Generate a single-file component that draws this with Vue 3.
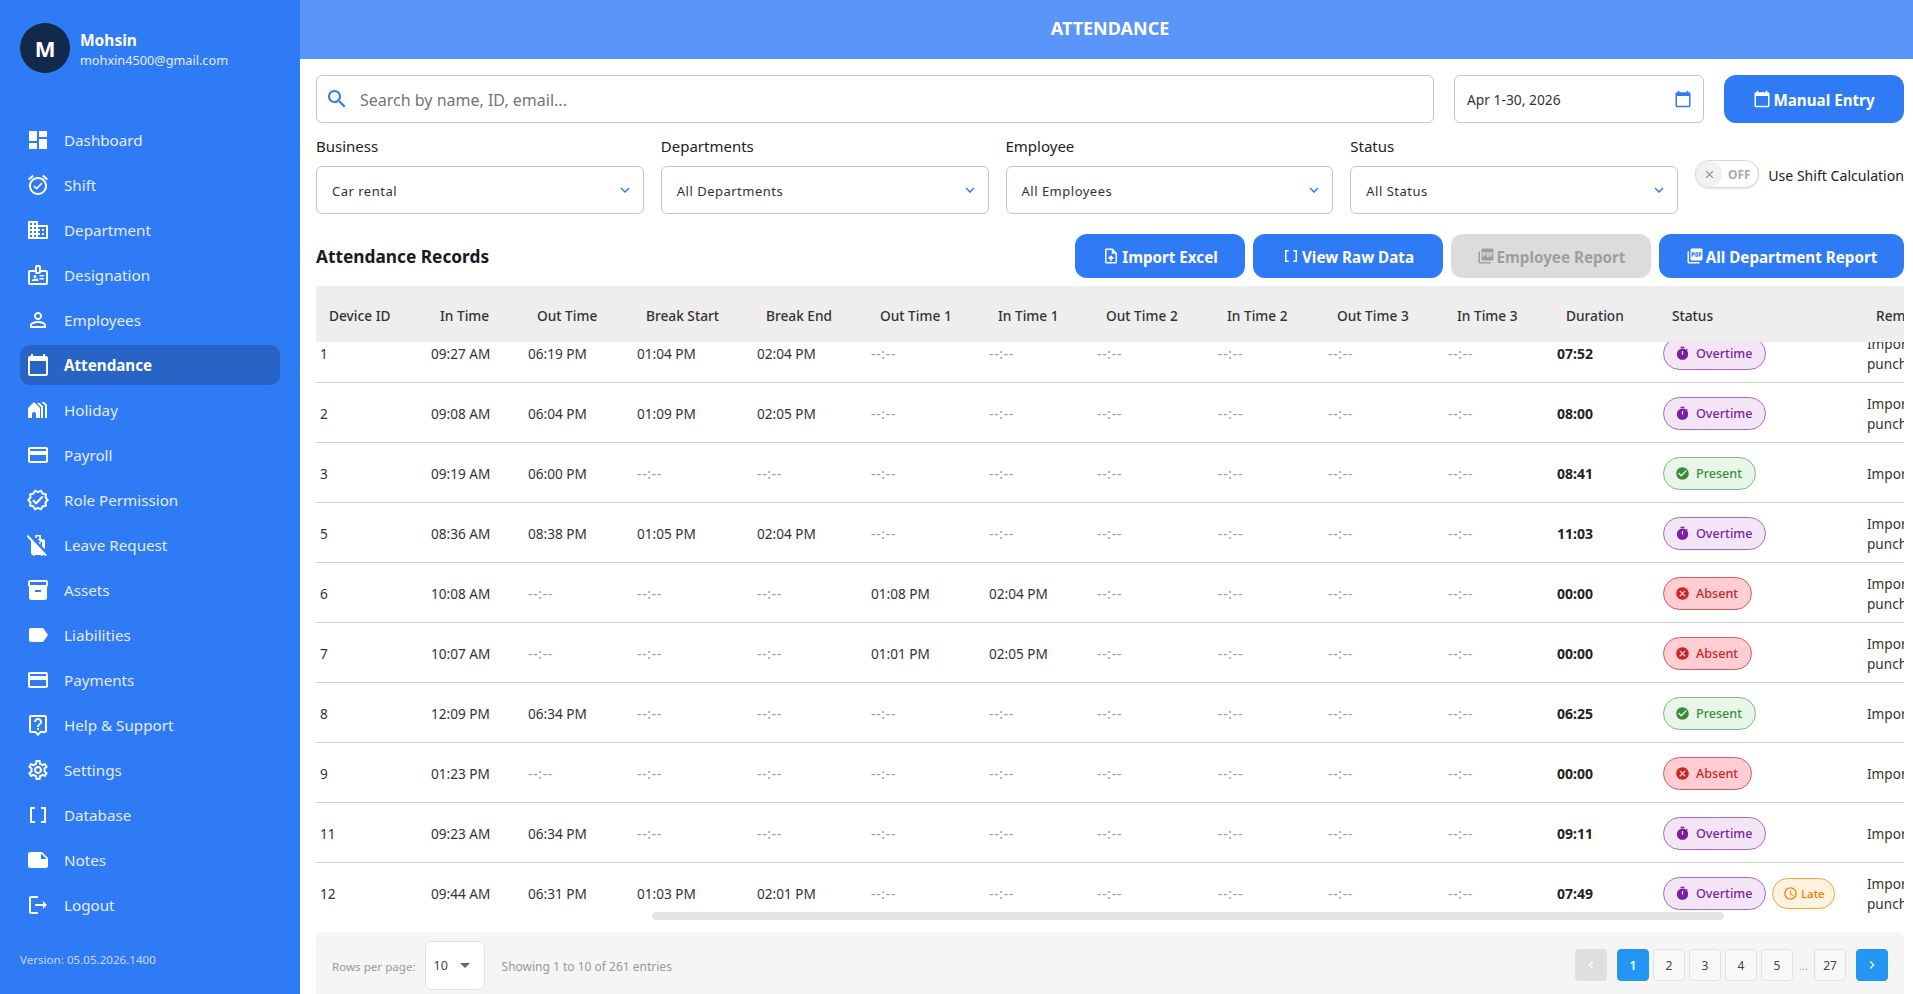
<template>
  <div class="layout">
    <!-- sidebar -->
    <aside class="sidebar">
      <div class="profile">
        <div class="avatar">M</div>
        <div class="profile-text">
          <div class="profile-name">Mohsin</div>
          <div class="profile-mail">mohxin4500@gmail.com</div>
        </div>
      </div>

      <nav class="nav">
        <a v-for="item in navItems" :key="item.label" class="nav-item" :class="{ active: item.label === 'Attendance' }">
          <svg class="nav-icon" viewBox="0 0 24 24"><path :d="item.icon" /></svg>
          <span>{{ item.label }}</span>
        </a>
      </nav>

      <div class="version">Version: 05.05.2026.1400</div>
    </aside>

    <main class="main">
      <header class="topbar">ATTENDANCE</header>

      <div class="content">
        <div class="search-row">
          <div class="field search">
            <svg class="search-icon" viewBox="0 0 24 24"><path :d="icons.search" /></svg>
            <span class="placeholder">Search by name, ID, email...</span>
          </div>
          <div class="field date">
            <span>Apr 1-30, 2026</span>
            <svg class="date-icon" viewBox="0 0 24 24"><path :d="icons.calendar" /></svg>
          </div>
          <button class="btn manual">
            <svg viewBox="0 0 24 24"><path :d="icons.calendar" /></svg>
            Manual Entry
          </button>
        </div>

        <div class="filters">
          <div v-for="f in filters" :key="f.label">
            <label class="filter-label">{{ f.label }}</label>
            <div class="field select">
              <span>{{ f.value }}</span>
              <svg class="chevron" viewBox="0 0 24 24"><path :d="icons.chevron" /></svg>
            </div>
          </div>
          <div class="shift-toggle">
            <div class="toggle">
              <span class="thumb">
                <svg viewBox="0 0 24 24"><path :d="icons.close" /></svg>
              </span>
              <span class="off">OFF</span>
            </div>
            <span>Use Shift Calculation</span>
          </div>
        </div>

        <div class="records-head">
          <h2>Attendance Records</h2>
          <div class="actions">
            <button class="btn import">
              <svg viewBox="0 0 24 24"><path :d="icons.upload" /></svg>
              Import Excel
            </button>
            <button class="btn raw">
              <svg viewBox="0 0 24 24"><path :d="icons.brackets" /></svg>
              View Raw Data
            </button>
            <button class="btn employee" disabled>
              <svg viewBox="0 0 24 24"><path :d="icons.pdf" /></svg>
              Employee Report
            </button>
            <button class="btn department">
              <svg viewBox="0 0 24 24"><path :d="icons.pdf" /></svg>
              All Department Report
            </button>
          </div>
        </div>

        <div class="table-wrap">
          <div ref="scroller" class="table-scroll">
            <table>
              <colgroup>
                <col style="width: 498px" />
                <col v-for="(w, i) in colWidths" :key="i" :style="{ width: w + 'px' }" />
              </colgroup>
              <thead>
                <tr>
                  <th></th>
                  <th v-for="h in headers" :key="h">{{ h }}</th>
                </tr>
              </thead>
              <tbody>
                <tr v-for="row in rows" :key="row.id">
                  <td></td>
                  <td>{{ row.id }}</td>
                  <td v-for="(t, i) in row.times" :key="i" :class="{ empty: t === blank }">{{ t }}</td>
                  <td class="duration">{{ row.duration }}</td>
                  <td>
                    <div class="badges">
                      <span v-for="s in row.status" :key="s" class="badge" :class="s.toLowerCase()">
                        <svg viewBox="0 0 24 24"><path :d="statusIcons[s]" /></svg>
                        {{ s }}
                      </span>
                    </div>
                  </td>
                  <td class="remark">{{ row.remark }}</td>
                </tr>
              </tbody>
            </table>
          </div>
          <div class="scroll-thumb"></div>
        </div>

        <footer class="table-footer">
          <span class="muted rows-label">Rows per page:</span>
          <div class="rows-select">
            <span>10</span>
            <i class="caret"></i>
          </div>
          <span class="muted">Showing 1 to 10 of 261 entries</span>

          <div class="pager">
            <button class="page nav-btn disabled">
              <svg viewBox="0 0 24 24"><path :d="icons.prev" /></svg>
            </button>
            <button v-for="p in pages" :key="p" class="page" :class="{ current: p === 1 }">{{ p }}</button>
            <span class="dots">...</span>
            <button class="page last">27</button>
            <button class="page nav-btn next">
              <svg viewBox="0 0 24 24"><path :d="icons.next" /></svg>
            </button>
          </div>
        </footer>
      </div>
    </main>
  </div>
</template>

<script setup>
import { onMounted, ref } from 'vue'

const icons = {
  search: 'M15.5 14h-.79l-.28-.27C15.41 12.59 16 11.11 16 9.5 16 5.91 13.09 3 9.5 3S3 5.91 3 9.5 5.91 16 9.5 16c1.61 0 3.09-.59 4.23-1.57l.27.28v.79l5 4.99L20.49 19l-4.99-5zm-6 0C7.01 14 5 11.99 5 9.5S7.01 5 9.5 5 14 7.01 14 9.5 11.99 14 9.5 14z',
  calendar: 'M20 3h-1V1h-2v2H7V1H5v2H4c-1.1 0-2 .9-2 2v16c0 1.1.9 2 2 2h16c1.1 0 2-.9 2-2V5c0-1.1-.9-2-2-2zm0 18H4V8h16v13z',
  chevron: 'M16.59 8.59 12 13.17 7.41 8.59 6 10l6 6 6-6z',
  close: 'M19 6.41 17.59 5 12 10.59 6.41 5 5 6.41 10.59 12 5 17.59 6.41 19 12 13.41 17.59 19 19 17.59 13.41 12z',
  upload: 'M14 2H6c-1.1 0-1.99.9-1.99 2L4 20c0 1.1.89 2 1.99 2H18c1.1 0 2-.9 2-2V8l-6-6zm4 18H6V4h7v5h5v11zM8 15.01l1.41 1.41L11 14.84V19h2v-4.16l1.59 1.59L16 15.01 12.01 11z',
  brackets: 'M15 4v2h3v12h-3v2h5V4zM4 20h5v-2H6V6h3V4H4z',
  pdf: 'M20 2H8c-1.1 0-2 .9-2 2v12c0 1.1.9 2 2 2h12c1.1 0 2-.9 2-2V4c0-1.1-.9-2-2-2zm-8.5 7.5c0 .83-.67 1.5-1.5 1.5H9v2H7.5V7H10c.83 0 1.5.67 1.5 1.5v1zm5 2c0 .83-.67 1.5-1.5 1.5h-2.5V7H15c.83 0 1.5.67 1.5 1.5v3zm4-3H19v1h1.5V11H19v2h-1.5V7h3v1.5zM9 9.5h1v-1H9v1zM4 6H2v14c0 1.1.9 2 2 2h14v-2H4V6zm10 5.5h1v-3h-1v3z',
  prev: 'M15.41 7.41 14 6l-6 6 6 6 1.41-1.41L10.83 12z',
  next: 'M10 6 8.59 7.41 13.17 12l-4.58 4.59L10 18l6-6z',
}

const card = 'M20 4H4c-1.11 0-1.99.89-1.99 2L2 18c0 1.11.89 2 2 2h16c1.11 0 2-.89 2-2V6c0-1.11-.89-2-2-2zm0 14H4v-6h16v6zm0-10H4V6h16v2z'

const navItems = [
  { label: 'Dashboard', icon: 'M3 13h8V3H3v10zm0 8h8v-6H3v6zm10 0h8V11h-8v10zm0-18v6h8V3h-8z' },
  { label: 'Shift', icon: 'M22 5.72l-4.6-3.86-1.29 1.53 4.6 3.86L22 5.72zM7.88 3.39L6.6 1.86 2 5.71l1.29 1.53 4.59-3.85zM12 4c-4.97 0-9 4.03-9 9s4.03 9 9 9 9-4.03 9-9-4.03-9-9-9zm0 16c-3.86 0-7-3.14-7-7s3.14-7 7-7 7 3.14 7 7-3.13 7-7 7zm-1.46-5.47L8.41 12.4l-1.06 1.06 3.18 3.18 6-6-1.06-1.06-4.93 4.95z' },
  { label: 'Department', icon: 'M12 7V3H2v18h20V7H12zM6 19H4v-2h2v2zm0-4H4v-2h2v2zm0-4H4V9h2v2zm0-4H4V5h2v2zm4 12H8v-2h2v2zm0-4H8v-2h2v2zm0-4H8V9h2v2zm0-4H8V5h2v2zm10 12h-8v-2h2v-2h-2v-2h2v-2h-2V9h8v10zm-2-8h-2v2h2v-2zm0 4h-2v2h2v-2z' },
  { label: 'Designation', icon: 'M20 7h-5V4c0-1.1-.9-2-2-2h-2c-1.1 0-2 .9-2 2v3H4c-1.1 0-2 .9-2 2v11c0 1.1.9 2 2 2h16c1.1 0 2-.9 2-2V9c0-1.1-.9-2-2-2zM11 4h2v5h-2V4zm9 16H4V9h5c0 1.1.9 2 2 2h2c1.1 0 2-.9 2-2h5v11zM9 15c.83 0 1.5-.67 1.5-1.5S9.83 12 9 12s-1.5.67-1.5 1.5S8.17 15 9 15zm2.08 1.18c-.64-.28-1.35-.43-2.08-.43s-1.44.15-2.08.43c-.74.32-1.22 1.04-1.22 1.85V18h6.6v-.97c0-.81-.48-1.53-1.22-1.85zM13.5 12H18v1.5h-4.5zM13.5 15H18v1.5h-4.5z' },
  { label: 'Employees', icon: 'M12 5.9c1.16 0 2.1.94 2.1 2.1s-.94 2.1-2.1 2.1S9.9 9.16 9.9 8s.94-2.1 2.1-2.1m0 9c2.97 0 6.1 1.46 6.1 2.1v1.1H5.9V17c0-.64 3.13-2.1 6.1-2.1M12 4C9.79 4 8 5.79 8 8s1.79 4 4 4 4-1.79 4-4-1.79-4-4-4zm0 9c-2.67 0-8 1.34-8 4v3h16v-3c0-2.66-5.33-4-8-4z' },
  { label: 'Attendance', icon: icons.calendar },
  { label: 'Holiday', icon: 'M8 4l-6 6v10h4v-4c0-1.1.9-2 2-2s2 .9 2 2v4h4V10L8 4zm7 16h2V8.35L13.65 5H10.8l4.2 4.2V20zm4 0h2V6.69L18.31 4H15.5L19 7.5V20z' },
  { label: 'Payroll', icon: card },
  { label: 'Role Permission', icon: 'M23 11.99l-2.44-2.79.34-3.69-3.61-.82L15.4 1.5 12 2.96 8.6 1.5 6.71 4.69 3.1 5.5l.34 3.7L1 11.99l2.44 2.79-.34 3.7 3.61.82 1.89 3.2 3.4-1.47 3.4 1.46 1.89-3.19 3.61-.82-.34-3.69 2.44-2.8zm-3.95 1.48l-.56.65.08.85.18 1.95-1.9.43-.84.19-.44.74-.99 1.68-1.78-.77-.8-.34-.79.34-1.78.77-.99-1.67-.44-.74-.84-.19-1.9-.43.18-1.96.08-.85-.56-.65L3.67 12l1.29-1.48.56-.65-.09-.86-.18-1.94 1.9-.43.84-.19.44-.74.99-1.68 1.78.77.8.34.79-.34 1.78-.77.99 1.68.44.74.84.19 1.9.43-.18 1.95-.08.85.56.65 1.29 1.47-1.28 1.48zM10.09 13.75l-2.32-2.33-1.48 1.49 3.8 3.81 7.34-7.36-1.48-1.49z' },
  { label: 'Leave Request', icon: 'M12.75 9v.92l1.75 1.75V9H16v4.17l3 3V8c0-1.1-.9-2-2-2h-2V3c0-.55-.45-1-1-1h-4c-.55 0-1 .45-1 1v.92l1.75 1.75V3.5h2.5V6h-1.58l3 3zM2.1 2.1.69 3.51l4.37 4.37C5.02 7.92 5 7.96 5 8v12c0 1.1.9 2 2 2 0 .55.45 1 1 1s1-.45 1-1h6c0 .55.45 1 1 1s1-.45 1-1c.34 0 .65-.09.93-.24l1.56 1.56 1.41-1.41L2.1 2.1z' },
  { label: 'Assets', icon: 'M20 2H4c-1 0-2 .9-2 2v3.01c0 .72.43 1.34 1 1.69V20c0 1.1 1.1 2 2 2h14c.9 0 2-.9 2-2V8.7c.57-.35 1-.97 1-1.69V4c0-1.1-1-2-2-2zm-5 12H9v-2h6v2zm5-7H4V4h16v3z' },
  { label: 'Liabilities', icon: 'M17.63 5.84C17.27 5.33 16.67 5 16 5L5 5.01C3.9 5.01 3 5.9 3 7v10c0 1.1.9 1.99 2 1.99L16 19c.67 0 1.27-.33 1.63-.84L22 12l-4.37-6.16z' },
  { label: 'Payments', icon: card },
  { label: 'Help & Support', icon: 'M19 2H5c-1.11 0-2 .9-2 2v14c0 1.1.89 2 2 2h4l3 3 3-3h4c1.1 0 2-.9 2-2V4c0-1.1-.9-2-2-2zm0 16h-4.83l-.59.59L12 20.17l-1.59-1.59-.58-.58H5V4h14v14zm-8-3h2v2h-2zm1-8c1.1 0 2 .9 2 2 0 2-3 1.75-3 5h2c0-2.25 3-2.5 3-5 0-2.21-1.79-4-4-4S8 6.79 8 9h2c0-1.1.9-2 2-2z' },
  { label: 'Settings', icon: 'M19.43 12.98c.04-.32.07-.64.07-.98 0-.34-.03-.66-.07-.98l2.11-1.65c.19-.15.24-.42.12-.64l-2-3.46c-.09-.16-.26-.25-.44-.25-.06 0-.12.01-.17.03l-2.49 1c-.52-.4-1.08-.73-1.69-.98l-.38-2.65C14.46 2.18 14.25 2 14 2h-4c-.25 0-.46.18-.49.42l-.38 2.65c-.61.25-1.17.59-1.69.98l-2.49-1c-.06-.02-.12-.03-.18-.03-.17 0-.34.09-.43.25l-2 3.46c-.13.22-.07.49.12.64l2.11 1.65c-.04.32-.07.65-.07.98 0 .33.03.66.07.98l-2.11 1.65c-.19.15-.24.42-.12.64l2 3.46c.09.16.26.25.44.25.06 0 .12-.01.17-.03l2.49-1c.52.4 1.08.73 1.69.98l.38 2.65c.03.24.24.42.49.42h4c.25 0 .46-.18.49-.42l.38-2.65c.61-.25 1.17-.59 1.69-.98l2.49 1c.06.02.12.03.18.03.17 0 .34-.09.43-.25l2-3.46c.12-.22.07-.49-.12-.64l-2.11-1.65zm-1.98-1.71c.04.31.05.52.05.73 0 .21-.02.43-.05.73l-.14 1.13.89.7 1.08.84-.7 1.21-1.27-.51-1.04-.42-.9.68c-.43.32-.84.56-1.25.73l-1.06.43-.16 1.13-.2 1.35h-1.4l-.19-1.35-.16-1.13-1.06-.43c-.43-.18-.83-.41-1.23-.71l-.91-.7-1.06.43-1.27.51-.7-1.21 1.08-.84.89-.7-.14-1.13c-.03-.31-.05-.54-.05-.74s.02-.43.05-.73l.14-1.13-.89-.7-1.08-.84.7-1.21 1.27.51 1.04.42.9-.68c.43-.32.84-.56 1.25-.73l1.06-.43.16-1.13.2-1.35h1.39l.19 1.35.16 1.13 1.06.43c.43.18.83.41 1.23.71l.91.7 1.06-.43 1.27-.51.7 1.21-1.07.85-.89.7.14 1.13zM12 8c-2.21 0-4 1.79-4 4s1.79 4 4 4 4-1.79 4-4-1.79-4-4-4zm0 6c-1.1 0-2-.9-2-2s.9-2 2-2 2 .9 2 2-.9 2-2 2z' },
  { label: 'Database', icon: icons.brackets },
  { label: 'Notes', icon: 'M22 10l-6-6H4c-1.1 0-2 .9-2 2v12.01c0 1.1.9 1.99 2 1.99l16-.01c1.1 0 2-.89 2-1.99v-8zm-7-4.5l5.5 5.5H15V5.5z' },
  { label: 'Logout', icon: 'M5 5h7V3H5c-1.1 0-2 .9-2 2v14c0 1.1.9 2 2 2h7v-2H5V5zm16 7l-4-4v3H9v2h8v3l4-4z' },
]

const statusIcons = {
  Overtime: 'M9 1h6v2H9zM19.03 7.39l1.42-1.42c-.43-.51-.9-.99-1.41-1.41l-1.42 1.42C16.07 4.74 14.12 4 12 4c-4.97 0-9 4.03-9 9s4.03 9 9 9 9-4.03 9-9c0-2.12-.74-4.07-1.97-5.61zM13 14h-2V8h2v6z',
  Present: 'M12 2C6.48 2 2 6.48 2 12s4.48 10 10 10 10-4.48 10-10S17.52 2 12 2zm-2 15l-5-5 1.41-1.41L10 14.17l7.59-7.59L19 8l-9 9z',
  Absent: 'M12 2C6.47 2 2 6.47 2 12s4.47 10 10 10 10-4.47 10-10S17.53 2 12 2zm5 13.59L15.59 17 12 13.41 8.41 17 7 15.59 10.59 12 7 8.41 8.41 7 12 10.59 15.59 7 17 8.41 13.41 12 17 15.59z',
  Late: 'M11.99 2C6.47 2 2 6.48 2 12s4.47 10 9.99 10C17.52 22 22 17.52 22 12S17.52 2 11.99 2zM12 20c-4.42 0-8-3.58-8-8s3.58-8 8-8 8 3.58 8 8-3.58 8-8 8zm.5-13H11v6l5.25 3.15.75-1.23-4.5-2.67z',
}

const filters = [
  { label: 'Business', value: 'Car rental' },
  { label: 'Departments', value: 'All Departments' },
  { label: 'Employee', value: 'All Employees' },
  { label: 'Status', value: 'All Status' },
]

const headers = ['Device ID', 'In Time', 'Out Time', 'Break Start', 'Break End', 'Out Time 1', 'In Time 1', 'Out Time 2', 'In Time 2', 'Out Time 3', 'In Time 3', 'Duration', 'Status', 'Remarks']
const colWidths = [111, 97, 109, 120, 114, 118, 108, 121, 110, 120, 109, 106, 204, 307]

const blank = '--:--'
const twoLine = 'Imported from\npunch machine'
const oneLine = 'Imported from device'

// build a row: in, out, break start, break end, then the two punches that some rows have
const makeRow = (id, inTime, outTime, breakStart, breakEnd, out1, in1, duration, status, remark) => ({
  id,
  times: [inTime, outTime, breakStart, breakEnd, out1, in1, blank, blank, blank, blank],
  duration,
  status,
  remark,
})

const rows = [
  makeRow(1, '09:27 AM', '06:19 PM', '01:04 PM', '02:04 PM', blank, blank, '07:52', ['Overtime'], twoLine),
  makeRow(2, '09:08 AM', '06:04 PM', '01:09 PM', '02:05 PM', blank, blank, '08:00', ['Overtime'], twoLine),
  makeRow(3, '09:19 AM', '06:00 PM', blank, blank, blank, blank, '08:41', ['Present'], oneLine),
  makeRow(5, '08:36 AM', '08:38 PM', '01:05 PM', '02:04 PM', blank, blank, '11:03', ['Overtime'], twoLine),
  makeRow(6, '10:08 AM', blank, blank, blank, '01:08 PM', '02:04 PM', '00:00', ['Absent'], twoLine),
  makeRow(7, '10:07 AM', blank, blank, blank, '01:01 PM', '02:05 PM', '00:00', ['Absent'], twoLine),
  makeRow(8, '12:09 PM', '06:34 PM', blank, blank, blank, blank, '06:25', ['Present'], oneLine),
  makeRow(9, '01:23 PM', blank, blank, blank, blank, blank, '00:00', ['Absent'], oneLine),
  makeRow(11, '09:23 AM', '06:34 PM', blank, blank, blank, blank, '09:11', ['Overtime'], oneLine),
  makeRow(12, '09:44 AM', '06:31 PM', '01:03 PM', '02:01 PM', blank, blank, '07:49', ['Overtime', 'Late'], twoLine),
]

const pages = [1, 2, 3, 4, 5]

// the list is a little scrolled, both ways
const scroller = ref(null)
onMounted(() => {
  scroller.value.scrollTop = 19
  scroller.value.scrollLeft = 498
})
</script>

<style>
html,
body {
  margin: 0;
  height: 100%;
  overflow: hidden;
  background: #fff;
}
</style>

<style scoped>
.layout {
  display: flex;
  height: 994px;
  overflow: hidden;
  font-family: "Noto Sans", "Open Sans", sans-serif;
  color: #222;
}

/* sidebar */
.sidebar {
  width: 300px;
  flex-shrink: 0;
  background: #2f7af5;
  padding: 23px 20px 0;
  box-sizing: border-box;
}

.profile {
  display: flex;
  align-items: center;
  gap: 10px;
}

.avatar {
  width: 50px;
  height: 50px;
  border-radius: 50%;
  background: #13294b;
  color: #fff;
  font-size: 22px;
  font-weight: 700;
  display: flex;
  align-items: center;
  justify-content: center;
}

.profile-text {
  padding-top: 3px;
}

.profile-name {
  color: #fff;
  font-size: 15.5px;
  font-weight: 700;
  line-height: 20px;
}

.profile-mail {
  color: #e3edff;
  font-size: 12.7px;
  line-height: 20px;
}

.nav {
  margin-top: 47px;
  display: flex;
  flex-direction: column;
  gap: 5px;
}

.nav-item {
  height: 40px;
  display: flex;
  align-items: center;
  gap: 14px;
  padding-left: 6px;
  border-radius: 10px;
  color: #e3edff;
  font-size: 15.2px;
}

.nav-item.active {
  background: #2764c6;
  color: #fff;
  font-weight: 700;
}

.nav-icon {
  width: 24px;
  height: 24px;
  fill: #fff;
}

.version {
  margin-top: 27px;
  color: #c6d9fb;
  font-size: 11.6px;
  line-height: 16px;
}

/* main */
.main {
  flex: 1;
  min-width: 0;
  display: flex;
  flex-direction: column;
}

.topbar {
  height: 59px;
  flex-shrink: 0;
  background: #5a95f9;
  color: #fff;
  font-size: 18px;
  font-weight: 700;
  display: flex;
  align-items: center;
  justify-content: center;
  padding: 0 0 3px 7px;
  box-sizing: border-box;
}

.content {
  padding: 16px 9px 0 16px;
  min-width: 0;
}

.search-row {
  display: flex;
  gap: 20px;
}

.field {
  height: 48px;
  box-sizing: border-box;
  border: 1px solid #c4c4c4;
  border-radius: 6px;
  background: #fff;
  display: flex;
  align-items: center;
}

.search {
  flex: 1;
  padding-left: 8px;
}

.search-icon {
  width: 24px;
  height: 24px;
  fill: #2f7af5;
}

.placeholder {
  margin: 2px 0 0 11px;
  font-size: 16px;
  color: #757575;
}

.date {
  width: 250px;
  padding: 0 11px 0 12px;
  justify-content: space-between;
  font-size: 13.8px;
  color: #333;
}

.date-icon {
  width: 18px;
  height: 18px;
  fill: #2f7af5;
}

.btn {
  border: none;
  border-radius: 12px;
  background: #2f7af5;
  color: #fff;
  font-family: inherit;
  font-size: 15.2px;
  font-weight: 700;
  display: inline-flex;
  align-items: center;
  justify-content: center;
  gap: 2px;
  padding: 2px 0 0;
  white-space: nowrap;
}

.btn svg {
  width: 18px;
  height: 18px;
  fill: currentColor;
  margin-top: -2px;
}

.manual {
  width: 180px;
  height: 48px;
}

.filters {
  display: grid;
  grid-template-columns: repeat(4, 1fr) 209px;
  column-gap: 17px;
  margin-top: 13px;
}

.filter-label {
  display: block;
  font-size: 15px;
  line-height: 20px;
  margin-bottom: 10px;
  color: #222;
}

.select {
  padding: 2px 9px 0 15px;
  justify-content: space-between;
  font-size: 13px;
  letter-spacing: 0.5px;
  color: #333;
}

.chevron {
  width: 18px;
  height: 18px;
  fill: #2f7af5;
  margin-top: -2px;
}

.shift-toggle {
  margin-top: 24px;
  display: flex;
  align-items: center;
  justify-content: space-between;
  height: 28px;
  font-size: 14.1px;
  color: #222;
  white-space: nowrap;
}

.shift-toggle > span {
  padding-top: 2px;
}

.toggle {
  width: 64px;
  height: 28px;
  box-sizing: border-box;
  border: 1px solid #d8d8d8;
  border-radius: 14px;
  background: #fff;
  box-shadow: 0 1px 2px rgba(0, 0, 0, 0.12);
  display: flex;
  align-items: center;
  color: #aaa;
  font-size: 12px;
  font-weight: 700;
}

.thumb {
  width: 26px;
  height: 26px;
  border-radius: 50%;
  background: #f1f1f1;
  display: flex;
  align-items: center;
  justify-content: center;
}

.thumb svg {
  width: 13px;
  height: 13px;
  fill: #888;
}

.off {
  margin-left: 6px;
}

.records-head {
  margin-top: 20px;
  display: flex;
  align-items: center;
  justify-content: space-between;
}

.records-head h2 {
  margin: 1px 0 0;
  font-size: 17.3px;
  font-weight: 700;
  color: #1a1a1a;
}

.actions {
  display: flex;
  gap: 8px;
}

.actions .btn {
  height: 44px;
}

.import {
  width: 170px;
}

.raw {
  width: 190px;
}

.employee {
  width: 200px;
  background: #dcdcdc;
  color: #9e9e9e;
}

.department {
  width: 245px;
}

/* table */
.table-wrap {
  position: relative;
  margin-top: 8px;
}

.table-scroll {
  height: 634px;
  overflow: auto;
  scrollbar-width: none;
}

/* the horizontal scrollbar, on top of the last row */
.scroll-thumb {
  position: absolute;
  left: 336px;
  bottom: 0;
  width: 1072px;
  height: 8px;
  border-radius: 4px;
  background: #e4e4e4;
}

table {
  width: 2352px;
  table-layout: fixed;
  border-collapse: separate;
  border-spacing: 0;
}

th {
  position: sticky;
  top: 0;
  z-index: 1;
  height: 56px;
  padding: 2px 0 0 13px;
  box-sizing: border-box;
  background: #eee;
  font-size: 13.7px;
  font-weight: 500;
  color: #333;
  text-align: left;
}

td {
  height: 60px;
  padding: 1px 4px 0;
  box-sizing: border-box;
  border-bottom: 1px solid #cdcdcd;
  font-size: 13.6px;
  color: #333;
}

td.empty {
  color: #999;
  letter-spacing: 0.8px;
}

td.duration {
  font-weight: 700;
  font-size: 14px;
  color: #222;
}

td.remark {
  white-space: pre-line;
  line-height: 20px;
  padding-top: 2px;
}

.badges {
  display: flex;
  align-items: center;
  gap: 6px;
}

.badge {
  height: 33px;
  box-sizing: border-box;
  border: 1px solid;
  border-radius: 17px;
  padding: 0 12.5px 0 11px;
  display: inline-flex;
  align-items: center;
  gap: 6px;
  font-size: 12.6px;
  font-weight: 500;
}

.badge svg {
  width: 15px;
  height: 15px;
  fill: currentColor;
}

.overtime {
  background: #f3e5f5;
  border-color: #a26bc0;
  color: #7b1fa2;
}

.present {
  background: #e8f5e9;
  border-color: #7db884;
  color: #388e3c;
}

.absent {
  background: #ffcdd2;
  border-color: #d9565a;
  color: #c62828;
}

.badge.late {
  height: 31px;
  padding: 0 9px 0 10px;
  gap: 3px;
  background: #fff3e0;
  border-color: #f5a43a;
  color: #f57c00;
  font-size: 11.5px;
}

/* footer */
.table-footer {
  margin-top: 12px;
  height: 66px;
  box-sizing: border-box;
  background: #f5f5f5;
  border-radius: 8px 8px 0 0;
  padding: 0 16px;
  display: flex;
  align-items: center;
}

.muted {
  color: #999;
  font-size: 12px;
  padding-top: 2px;
}

.rows-label {
  margin-right: 9px;
  font-size: 11.6px;
}

.rows-select {
  width: 60px;
  height: 49px;
  box-sizing: border-box;
  border: 1px solid #e2e2e2;
  border-radius: 6px;
  background: #fff;
  margin-right: 17px;
  display: flex;
  align-items: center;
  justify-content: space-between;
  padding: 0 14px 0 8px;
  font-size: 12.5px;
  color: #444;
}

.caret {
  width: 0;
  height: 0;
  border-left: 5px solid transparent;
  border-right: 5px solid transparent;
  border-top: 5px solid #666;
}

.pager {
  margin-left: auto;
  display: flex;
  align-items: center;
  gap: 4px;
}

.page {
  width: 32px;
  height: 32px;
  box-sizing: border-box;
  padding: 0;
  border: 1px solid #e2e2e2;
  border-radius: 4px;
  background: #f8f8f8;
  font-family: inherit;
  font-size: 12px;
  color: #444;
  display: flex;
  align-items: center;
  justify-content: center;
}

.page.current {
  background: #2196f3;
  border-color: #2196f3;
  color: #fff;
  font-weight: 600;
  margin-left: 6px;
}

.nav-btn svg {
  width: 16px;
  height: 16px;
  fill: #fff;
}

.nav-btn.disabled {
  background: #dfdfdf;
  border-color: #dfdfdf;
}

.nav-btn.next {
  background: #2196f3;
  border-color: #2196f3;
  margin-left: 6px;
}

.dots {
  width: 13px;
  text-align: center;
  font-size: 11px;
  color: #999;
}
</style>
